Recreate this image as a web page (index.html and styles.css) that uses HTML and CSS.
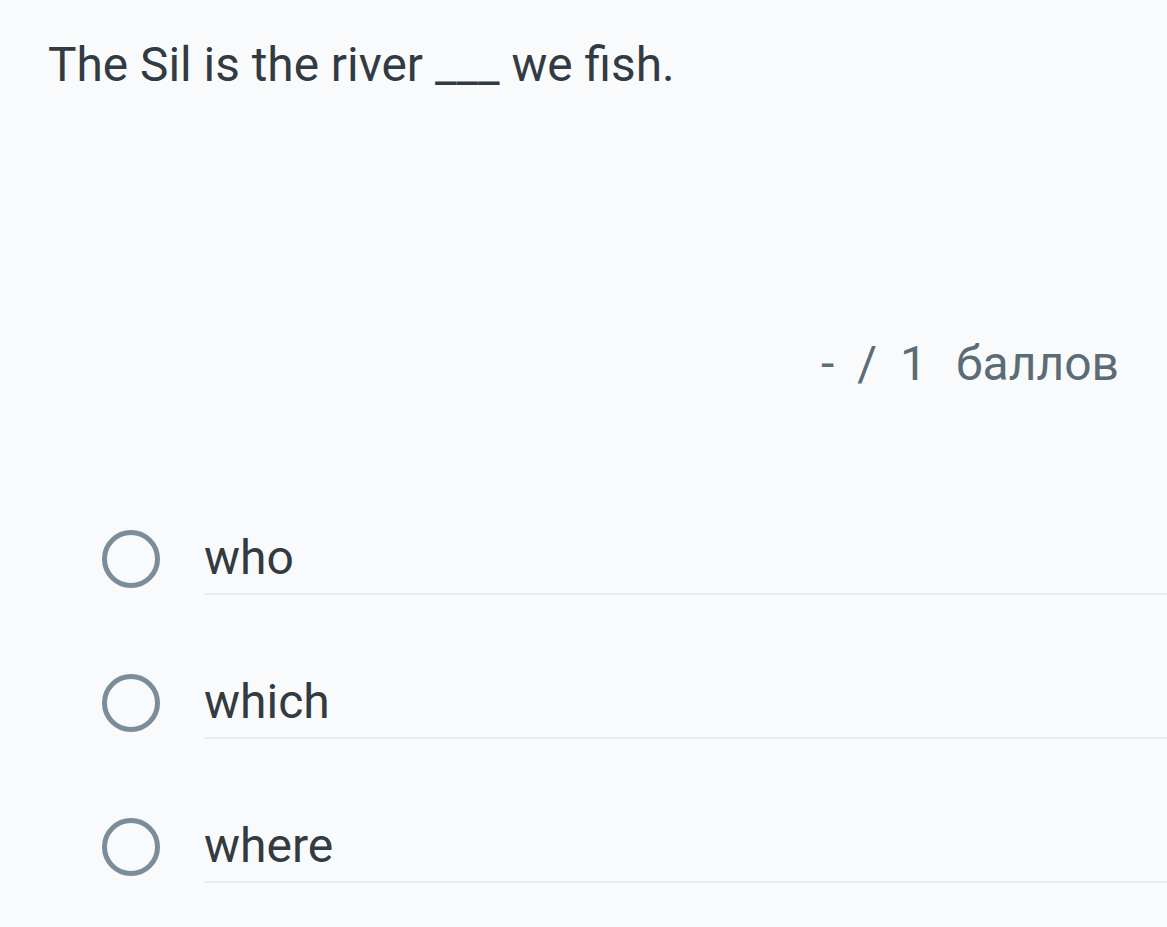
FILE: index.html
```html
<!DOCTYPE html>
<html>
<head>
<meta charset="utf-8">
<link rel="stylesheet" href="styles.css">
</head>
<body>
<div class="page">
  <div class="question">The Sil is the river ___ we fish.</div>
  <div class="score"><span>-</span><span>/</span><span>1</span><span>баллов</span></div>
  <div class="options">
    <label class="option"><span class="radio"></span><span class="label">who</span></label>
    <label class="option"><span class="radio"></span><span class="label">which</span></label>
    <label class="option"><span class="radio"></span><span class="label">where</span></label>
  </div>
</div>
</body>
</html>
```
FILE: styles.css
```css
html, body {
  margin: 0;
  padding: 0;
  background: #f8fafc;
}
body {
  font-family: Roboto, "Liberation Sans", sans-serif;
  color: #323b42;
}
.page {
  padding: 30px 0 0 48px;
}
.question {
  font-size: 47.8px;
  line-height: 70px;
}
.score {
  display: flex;
  justify-content: flex-end;
  gap: 23px;
  padding-right: 48px;
  margin-top: 234px;
  font-size: 48px;
  line-height: 60px;
  color: #5b6c77;
}
.score span:last-child {
  margin-left: 6px;
}
.options {
  margin-top: 129px;
  display: flex;
  flex-direction: column;
  gap: 72px;
}
.option {
  display: flex;
  align-items: center;
  height: 72px;
}
.radio {
  width: 48px;
  height: 48px;
  border: 5px solid #7b8d99;
  border-radius: 50%;
  margin-left: 54px;
  flex: none;
}
.label {
  flex: 1;
  margin-left: 44px;
  font-size: 48px;
  height: 72px;
  line-height: 70px;
  border-bottom: 2px solid #e9ecef;
  box-sizing: border-box;
}
```
